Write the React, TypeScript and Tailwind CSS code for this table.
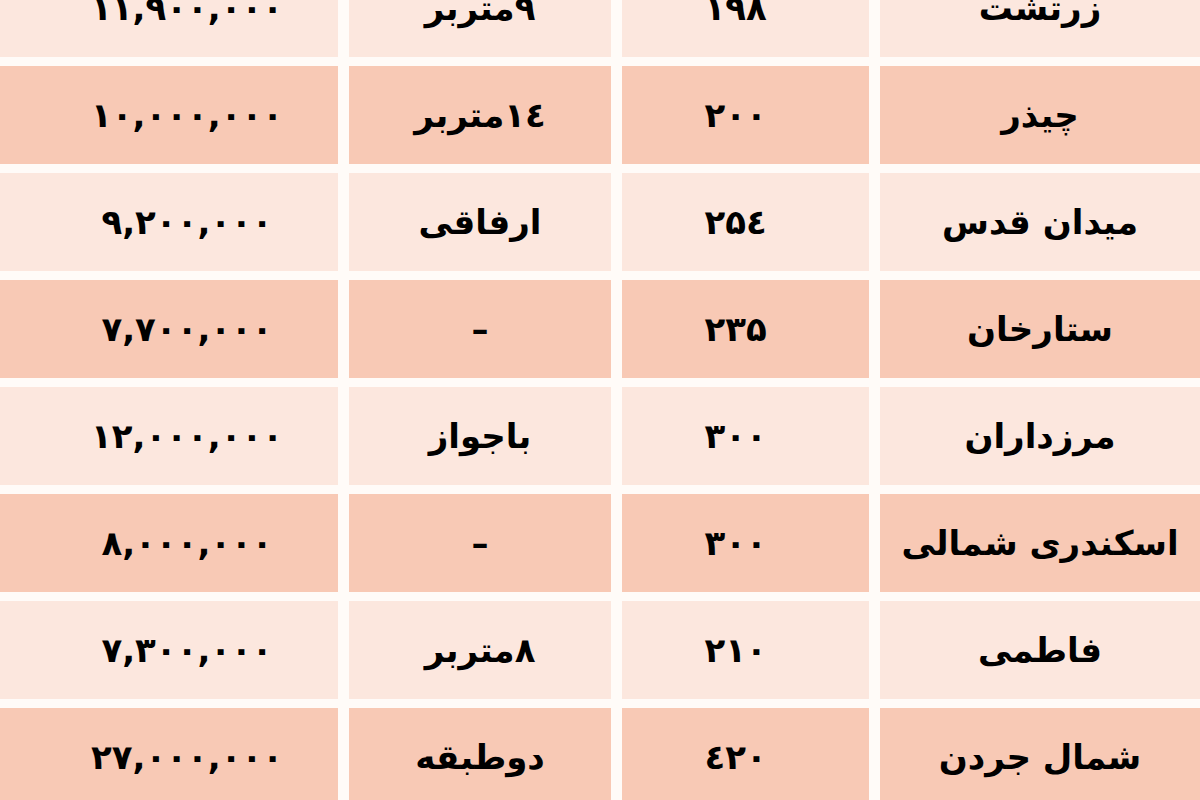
import React from 'react';

type Row = { area: string; size: string; note: string; price: string };

const rows: Row[] = [
    { area: 'زرتشت', size: '۱۹۸', note: '۹متربر', price: '۱۱,۹۰۰,۰۰۰' },
    { area: 'چیذر', size: '۲۰۰', note: '۱٤متربر', price: '۱۰,۰۰۰,۰۰۰' },
    { area: 'میدان قدس', size: '۲۵٤', note: 'ارفاقی', price: '۹,۲۰۰,۰۰۰' },
    { area: 'ستارخان', size: '۲۳۵', note: '–', price: '۷,۷۰۰,۰۰۰' },
    { area: 'مرزداران', size: '۳۰۰', note: 'باجواز', price: '۱۲,۰۰۰,۰۰۰' },
    { area: 'اسکندری شمالی', size: '۳۰۰', note: '–', price: '۸,۰۰۰,۰۰۰' },
    { area: 'فاطمی', size: '۲۱۰', note: '۸متربر', price: '۷,۳۰۰,۰۰۰' },
    { area: 'شمال جردن', size: '٤۲۰', note: 'دوطبقه', price: '۲۷,۰۰۰,۰۰۰' },
];

const App: React.FC = () => {
    return (
        <div className="w-[1200px] h-[800px] overflow-hidden bg-[#fffbf8]" style={{ fontFamily: '"DejaVu Sans", sans-serif' }}>
            <div dir="rtl" className="-mt-[41px] grid grid-cols-[320px_247px_262px_338px] gap-x-[11px] gap-y-[9px] text-[34px] font-bold text-black">
                {rows.map((row, i) => {
                    const bg = i % 2 === 0 ? 'bg-[#fce7de]' : 'bg-[#f8c9b5]';
                    return (
                        <React.Fragment key={row.area}>
                            <div className={`${bg} h-[98px] flex items-center justify-center whitespace-nowrap overflow-hidden`}>{row.area}</div>
                            <div className={`${bg} h-[98px] flex items-center justify-center pr-[20px]`}>{row.size}</div>
                            <div className={`${bg} h-[98px] flex items-center justify-center`}>{row.note}</div>
                            <div className={`${bg} h-[98px] flex items-center justify-center pl-[36px] tracking-[5px]`}>{row.price}</div>
                        </React.Fragment>
                    );
                })}
            </div>
        </div>
    );
};

export default App;
